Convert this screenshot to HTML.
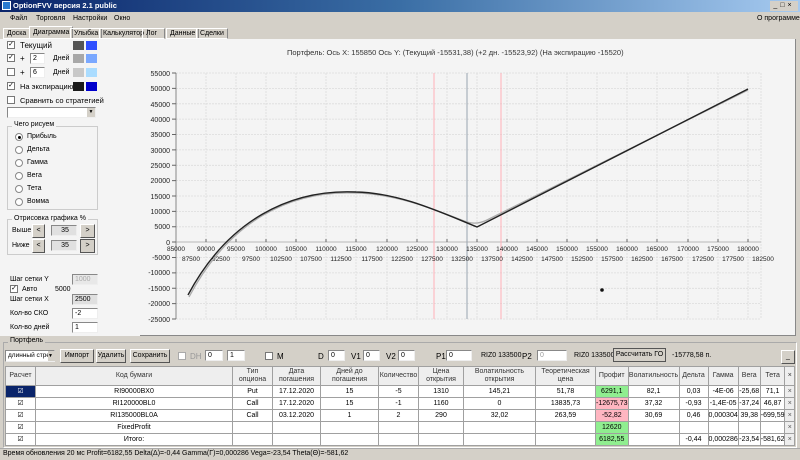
<!DOCTYPE html>
<html><head><meta charset="utf-8"><style>
*{box-sizing:border-box;margin:0;padding:0}
body{width:800px;height:460px;overflow:hidden;background:#d4d0c8;font-family:"Liberation Sans","DejaVu Sans",sans-serif;font-size:8px;color:#000;position:relative}
.a{position:absolute;white-space:nowrap}
.cb{position:absolute;width:8px;height:8px;border:1px solid #777;background:#fff;font-size:7px;line-height:6px;text-align:center}
.rb{position:absolute;width:8px;height:8px;border:1px solid #888;border-radius:50%;background:#fff}
.in{position:absolute;height:11px;border:1px solid #888;border-right-color:#eee;border-bottom-color:#eee;background:#fff;padding-left:2px;line-height:9px;font-size:7px}
.btn{position:absolute;height:14px;border:1px solid #fff;border-right-color:#555;border-bottom-color:#555;background:#d4d0c8;text-align:center;line-height:12px;font-size:7px}
.sw{position:absolute;width:11px;height:9px}
table{border-collapse:collapse;position:absolute;left:5px;top:366px;width:790px;font-size:7px;background:#fff}
td{border:1px solid #a0a0a0;text-align:center;height:12px;padding:0;line-height:10px}
tr.h td{background:#eeeeee;height:19px;line-height:8px;color:#333}
.g{background:#90ee90}.r{background:#ffb6c1}
.x{background:#eee;color:#555}
</style></head><body>
<!-- title -->
<div class="a" style="left:0;top:0;width:800px;height:12px;background:linear-gradient(90deg,#0a246a,#3a6ea5 50%,#a6caf0)"></div>
<div class="a" style="left:2px;top:1px;width:9px;height:9px;background:#2a7ad0;border:1px solid #fff"></div>
<div class="a" style="left:13px;top:1px;color:#fff;font-weight:bold;font-size:7.5px">OptionFVV версия 2.1 public</div>
<div class="a" style="left:770px;top:1px;width:28px;height:10px;background:#d4d0c8;font-size:7px;line-height:9px;letter-spacing:3px;text-align:center">_□×</div>
<!-- menu -->
<div class="a" style="left:10px;top:15px;font-size:7px">Файл</div>
<div class="a" style="left:36px;top:15px;font-size:7px">Торговля</div>
<div class="a" style="left:73px;top:15px;font-size:7px">Настройки</div>
<div class="a" style="left:114px;top:15px;font-size:7px">Окно</div>
<div class="a" style="left:757px;top:15px;font-size:7px">О программе</div>
<!-- tabs -->
<div class="a" style="left:3px;top:28px;height:11px;border:1px solid #fff;border-right-color:#888;padding:0 3px;font-size:7px;line-height:9px">Доска</div>
<div class="a" style="left:29px;top:26px;height:13px;border:1px solid #fff;border-right-color:#888;padding:0 3px;font-size:7px;line-height:11px;background:#d4d0c8">Диаграмма</div>
<div class="a" style="left:70px;top:28px;height:11px;border:1px solid #fff;border-right-color:#888;padding:0 3px;font-size:7px;line-height:9px">Улыбка</div>
<div class="a" style="left:99px;top:28px;height:11px;border:1px solid #fff;border-right-color:#888;padding:0 3px;font-size:7px;line-height:9px">Калькулятор</div>
<div class="a" style="left:142px;top:28px;height:11px;border:1px solid #fff;border-right-color:#888;padding:0 3px;width:23px;font-size:7px;line-height:9px">Лог</div>
<div class="a" style="left:166px;top:28px;height:11px;border:1px solid #fff;border-right-color:#888;padding:0 3px;font-size:7px;line-height:9px">Данные</div>
<div class="a" style="left:196px;top:28px;height:11px;border:1px solid #fff;border-right-color:#888;padding:0 3px;font-size:7px;line-height:9px">Сделки</div>
<!-- chart area -->
<div class="a" style="left:140px;top:39px;width:656px;height:297px;background:#f4f4f4;border-right:1px solid #888;border-bottom:1px solid #888"></div>
<div class="a" style="left:0;top:39px;width:140px;height:297px;background:#f4f4f4"></div>
<!-- left panel -->
<div class="cb" style="left:7px;top:41px">✓</div><div class="a" style="left:20px;top:41px">Текущий</div>
<div class="sw" style="left:73px;top:41px;background:#555"></div><div class="sw" style="left:86px;top:41px;background:#3050ff"></div>
<div class="cb" style="left:7px;top:54px">✓</div><div class="a" style="left:20px;top:54px">+</div><div class="in" style="left:30px;top:53px;width:15px">2</div><div class="a" style="left:53px;top:55px;font-size:7px">Дней</div>
<div class="sw" style="left:73px;top:54px;background:#a8a8a8"></div><div class="sw" style="left:86px;top:54px;background:#7aa8ff"></div>
<div class="cb" style="left:7px;top:68px"></div><div class="a" style="left:20px;top:68px">+</div><div class="in" style="left:30px;top:67px;width:15px">6</div><div class="a" style="left:53px;top:69px;font-size:7px">Дней</div>
<div class="sw" style="left:73px;top:68px;background:#c8c8c8"></div><div class="sw" style="left:86px;top:68px;background:#aadcff"></div>
<div class="cb" style="left:7px;top:82px">✓</div><div class="a" style="left:20px;top:82px;font-size:7.5px">На экспирацию</div>
<div class="sw" style="left:73px;top:82px;background:#1a1a1a"></div><div class="sw" style="left:86px;top:82px;background:#0000cc"></div>
<div class="cb" style="left:7px;top:96px"></div><div class="a" style="left:20px;top:96px;font-size:7.5px">Сравнить со стратегией</div>
<div class="in" style="left:7px;top:107px;width:89px;height:11px"></div><div class="a" style="left:87px;top:108px;width:8px;height:9px;background:#d4d0c8;font-size:5px;text-align:center;line-height:9px">▼</div>
<div class="a" style="left:7px;top:126px;width:91px;height:84px;border:1px solid #ccc"></div>
<div class="a" style="left:12px;top:121px;background:#f4f4f4;padding:0 2px;font-size:7px">Чего рисуем</div>
<div class="rb" style="left:15px;top:133px"></div><div class="a" style="left:27px;top:133px;font-size:7px">Прибыль</div>
<div class="rb" style="left:15px;top:146px"></div><div class="a" style="left:27px;top:146px;font-size:7px">Дельта</div>
<div class="rb" style="left:15px;top:159px"></div><div class="a" style="left:27px;top:159px;font-size:7px">Гамма</div>
<div class="rb" style="left:15px;top:172px"></div><div class="a" style="left:27px;top:172px;font-size:7px">Вега</div>
<div class="rb" style="left:15px;top:185px"></div><div class="a" style="left:27px;top:185px;font-size:7px">Тета</div>
<div class="rb" style="left:15px;top:198px"></div><div class="a" style="left:27px;top:198px;font-size:7px">Вомма</div>
<div class="a" style="left:18px;top:136px;width:3px;height:3px;border-radius:50%;background:#000"></div>
<div class="a" style="left:7px;top:219px;width:91px;height:36px;border:1px solid #ccc"></div>
<div class="a" style="left:12px;top:215px;background:#f4f4f4;padding:0 2px;font-size:7px">Отрисовка графика %</div>
<div class="a" style="left:12px;top:227px;font-size:7px">Выше</div><div class="btn" style="left:32px;top:224px;width:13px">&lt;</div><div class="in" style="left:51px;top:225px;width:26px;background:#e0e0e0;text-align:center">35</div><div class="btn" style="left:80px;top:224px;width:15px">&gt;</div>
<div class="a" style="left:12px;top:242px;font-size:7px">Ниже</div><div class="btn" style="left:32px;top:239px;width:13px">&lt;</div><div class="in" style="left:51px;top:240px;width:26px;background:#e0e0e0;text-align:center">35</div><div class="btn" style="left:80px;top:239px;width:15px;border-color:#555">&gt;</div>
<div class="a" style="left:10px;top:276px;font-size:7px">Шаг сетки Y</div><div class="in" style="left:72px;top:274px;width:26px;background:#e8e8e8;color:#aaa">1000</div>
<div class="cb" style="left:10px;top:285px">✓</div><div class="a" style="left:22px;top:286px;font-size:7px">Авто</div><div class="a" style="left:55px;top:286px;font-size:7px">5000</div>
<div class="a" style="left:10px;top:296px;font-size:7px">Шаг сетки X</div><div class="in" style="left:72px;top:294px;width:26px;background:#e0e0e0">2500</div>
<div class="a" style="left:10px;top:310px;font-size:7px">Кол-во СКО</div><div class="in" style="left:72px;top:308px;width:26px">-2</div>
<div class="a" style="left:10px;top:324px;font-size:7px">Кол-во дней</div><div class="in" style="left:72px;top:322px;width:26px">1</div>
<!-- chart -->
<svg class="a" style="left:0;top:0" width="800" height="340" font-family="Liberation Sans, sans-serif" font-size="7">
<text x="287" y="55" font-size="7.5" fill="#333">Портфель: Ось X: 155850 Ось Y:  (Текущий -15531,38)  (+2 дн. -15523,92)  (На экспирацию -15520)</text>
<g stroke="#dcdcdc" stroke-dasharray="2,1" stroke-width="0.8">
<path d="M176 73H761M176 88.4H761M176 103.8H761M176 119.1H761M176 134.5H761M176 149.9H761M176 165.3H761M176 180.6H761M176 196H761M176 211.4H761M176 226.8H761M176 257.5H761M176 272.9H761M176 288.3H761M176 303.6H761M176 319H761"/>
<path d="M206 73V319M236 73V319M266 73V319M296 73V319M326 73V319M356 73V319M387 73V319M417 73V319M447 73V319M477 73V319M507 73V319M537 73V319M567 73V319M597 73V319M627 73V319M657 73V319M688 73V319M718 73V319M748 73V319M761 73V319"/>
</g>
<path d="M176 242H761" stroke="#ccc" stroke-width="1.5"/>
<path d="M176 73V319" stroke="#888"/>
<path d="M434 73V319M501 73V319" stroke="#ffb0b8"/>
<path d="M467 73V319" stroke="#99a4b0"/>
<g stroke="#666"><path d="M172 73h4M172 88.4h4M172 103.8h4M172 119.1h4M172 134.5h4M172 149.9h4M172 165.3h4M172 180.6h4M172 196h4M172 211.4h4M172 226.8h4M172 242h4M172 257.5h4M172 272.9h4M172 288.3h4M172 303.6h4M172 319h4"/>
<path d="M206 242v-3M236 242v-3M266 242v-3M296 242v-3M326 242v-3M356 242v-3M387 242v-3M417 242v-3M447 242v-3M477 242v-3M507 242v-3M537 242v-3M567 242v-3M597 242v-3M627 242v-3M657 242v-3M688 242v-3M718 242v-3M748 242v-3"/></g>
<g text-anchor="end" fill="#222"><text x="170" y="76">55000</text><text x="170" y="91">50000</text><text x="170" y="107">45000</text><text x="170" y="122">40000</text><text x="170" y="137">35000</text><text x="170" y="153">30000</text><text x="170" y="168">25000</text><text x="170" y="183">20000</text><text x="170" y="199">15000</text><text x="170" y="214">10000</text><text x="170" y="229">5000</text><text x="170" y="245">0</text><text x="170" y="260">-5000</text><text x="170" y="275">-10000</text><text x="170" y="291">-15000</text><text x="170" y="306">-20000</text><text x="170" y="322">-25000</text></g>
<g text-anchor="middle" fill="#222" font-size="6.5"><text x="176" y="251">85000</text><text x="206" y="251">90000</text><text x="236" y="251">95000</text><text x="266" y="251">100000</text><text x="296" y="251">105000</text><text x="326" y="251">110000</text><text x="356" y="251">115000</text><text x="387" y="251">120000</text><text x="417" y="251">125000</text><text x="447" y="251">130000</text><text x="477" y="251">135000</text><text x="507" y="251">140000</text><text x="537" y="251">145000</text><text x="567" y="251">150000</text><text x="597" y="251">155000</text><text x="627" y="251">160000</text><text x="657" y="251">165000</text><text x="688" y="251">170000</text><text x="718" y="251">175000</text><text x="748" y="251">180000</text>
<text x="191" y="261">87500</text><text x="221" y="261">92500</text><text x="251" y="261">97500</text><text x="281" y="261">102500</text><text x="311" y="261">107500</text><text x="341" y="261">112500</text><text x="372" y="261">117500</text><text x="402" y="261">122500</text><text x="432" y="261">127500</text><text x="462" y="261">132500</text><text x="492" y="261">137500</text><text x="522" y="261">142500</text><text x="552" y="261">147500</text><text x="582" y="261">152500</text><text x="612" y="261">157500</text><text x="642" y="261">162500</text><text x="672" y="261">167500</text><text x="703" y="261">172500</text><text x="733" y="261">177500</text><text x="763" y="261">182500</text></g>
<path d="M189 297C229 221 290 190 356 193C400 194 440 212 467 222Q477 225 487 220L748 90" fill="none" stroke="#aaa" stroke-width="1.3"/>
<path d="M188 295C228 220 290 189 356 192C400 193 440 212 477 227L748 89" fill="none" stroke="#222" stroke-width="1.4"/>
<circle cx="602" cy="290" r="1.8" fill="#111"/>
</svg>
<!-- portfolio -->
<div class="a" style="left:3px;top:342px;width:794px;height:106px;border:1px solid #fff;border-top-color:#aaa;border-left-color:#aaa"></div>
<div class="a" style="left:8px;top:337px;background:#d4d0c8;padding:0 2px;font-size:7px">Портфель</div>
<div class="in" style="left:5px;top:350px;width:50px;height:12px;font-size:6.5px">длинный стре</div><div class="a" style="left:48px;top:351px;width:7px;height:10px;background:#d4d0c8;font-size:5px;line-height:10px">▼</div>
<div class="btn" style="left:60px;top:349px;width:34px">Импорт</div>
<div class="btn" style="left:96px;top:349px;width:30px">Удалить</div>
<div class="btn" style="left:130px;top:349px;width:40px">Сохранить</div>
<div class="cb" style="left:178px;top:352px;border-color:#aaa"></div><div class="a" style="left:190px;top:352px;color:#999">DH</div>
<div class="in" style="left:205px;top:350px;width:18px">0</div><div class="in" style="left:227px;top:350px;width:18px">1</div>
<div class="cb" style="left:265px;top:352px"></div><div class="a" style="left:277px;top:352px">M</div>
<div class="a" style="left:318px;top:352px">D</div><div class="in" style="left:328px;top:350px;width:17px">0</div>
<div class="a" style="left:351px;top:352px">V1</div><div class="in" style="left:363px;top:350px;width:17px">0</div>
<div class="a" style="left:386px;top:352px">V2</div><div class="in" style="left:398px;top:350px;width:17px">0</div>
<div class="a" style="left:436px;top:352px">P1</div><div class="in" style="left:446px;top:350px;width:26px">0</div>
<div class="a" style="left:481px;top:352px;font-size:7px">RIZ0 133500</div><div class="a" style="left:522px;top:352px">P2</div><div class="in" style="left:537px;top:350px;width:30px;color:#999">0</div>
<div class="a" style="left:574px;top:352px;font-size:7px">RIZ0 133500</div>
<div class="btn" style="left:613px;top:348px;width:53px;border-color:#555">Рассчитать ГО</div>
<div class="a" style="left:672px;top:352px;font-size:7px">-15778,58 п.</div>
<div class="btn" style="left:781px;top:350px;width:14px">_</div>
<table>
<tr class="h"><td style="width:30px">Расчет</td><td style="width:197px">Код бумаги</td><td style="width:40px">Тип опциона</td><td style="width:48px">Дата погашения</td><td style="width:58px">Дней до погашения</td><td style="width:40px">Количество</td><td style="width:45px">Цена открытия</td><td style="width:72px">Волатильность открытия</td><td style="width:60px">Теоретическая цена</td><td style="width:30px">Профит</td><td style="width:51px">Волатильность</td><td style="width:29px">Дельта</td><td style="width:30px">Гамма</td><td style="width:22px">Вега</td><td style="width:23px">Тета</td><td class="x">×</td></tr>
<tr><td style="background:#0a246a;color:#fff">☑</td><td>RI90000BX0</td><td>Put</td><td>17.12.2020</td><td>15</td><td>-5</td><td>1310</td><td>145,21</td><td>51,78</td><td class="g">6291,1</td><td>82,1</td><td>0,03</td><td>-4E-06</td><td>-25,68</td><td>71,1</td><td class="x">×</td></tr>
<tr><td>☑</td><td>RI120000BL0</td><td>Call</td><td>17.12.2020</td><td>15</td><td>-1</td><td>1160</td><td>0</td><td>13835,73</td><td class="r">-12675,73</td><td>37,32</td><td>-0,93</td><td>-1,4E-05</td><td>-37,24</td><td>46,87</td><td class="x">×</td></tr>
<tr><td>☑</td><td>RI135000BL0A</td><td>Call</td><td>03.12.2020</td><td>1</td><td>2</td><td>290</td><td>32,02</td><td>263,59</td><td class="r">-52,82</td><td>30,69</td><td>0,46</td><td>0,000304</td><td>39,38</td><td>-699,59</td><td class="x">×</td></tr>
<tr><td>☑</td><td>FixedProfit</td><td></td><td></td><td></td><td></td><td></td><td></td><td></td><td class="g">12620</td><td></td><td></td><td></td><td></td><td></td><td class="x">×</td></tr>
<tr><td>☑</td><td>Итого:</td><td></td><td></td><td></td><td></td><td></td><td></td><td></td><td class="g">6182,55</td><td></td><td>-0,44</td><td>0,000286</td><td>-23,54</td><td>-581,62</td><td class="x">×</td></tr>
</table>
<div class="a" style="left:0;top:448px;width:800px;height:12px;background:#d4d0c8;border-top:1px solid #aaa"></div>
<div class="a" style="left:3px;top:450px;font-size:7px">Время обновления 20 мс  Profit=6182,55 Delta(Δ)=-0,44 Gamma(Γ)=0,000286 Vega=-23,54 Theta(Θ)=-581,62</div>
</body></html>
